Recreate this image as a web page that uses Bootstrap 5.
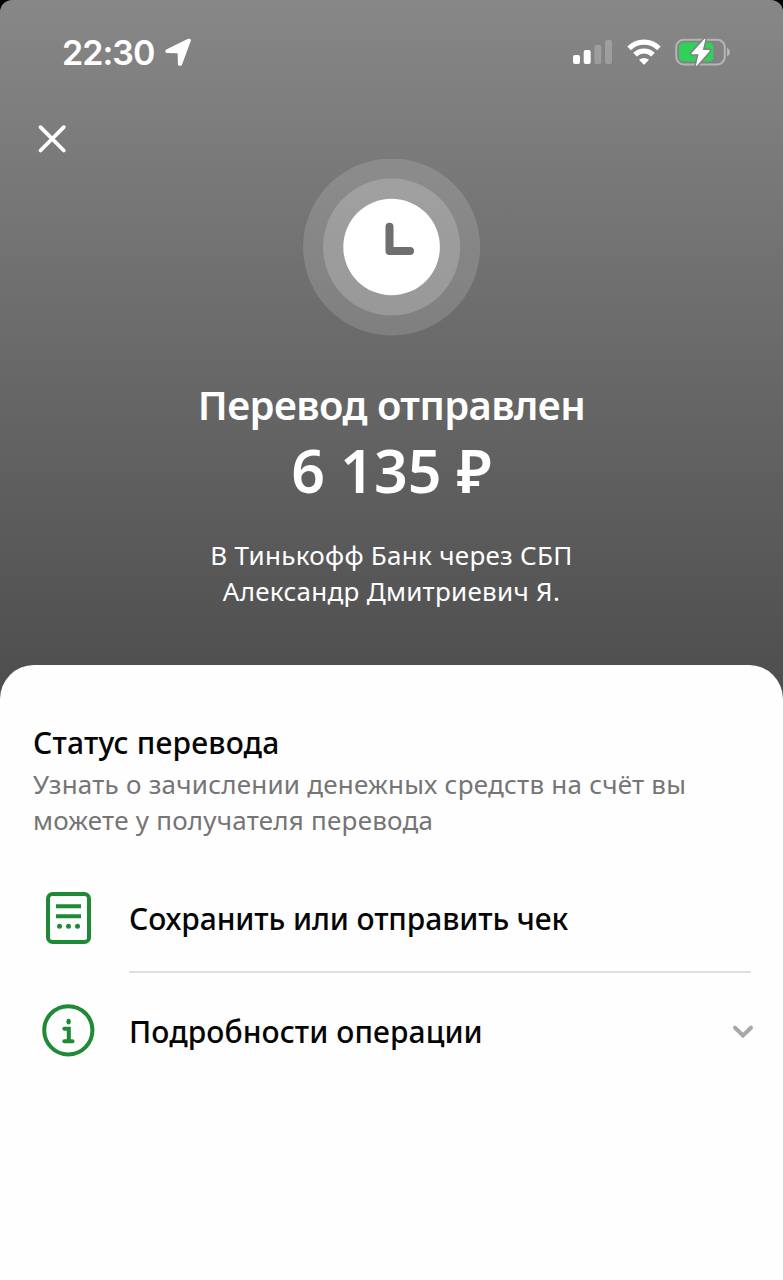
<!DOCTYPE html>
<html lang="ru">
<head>
<meta charset="utf-8">
<meta name="viewport" content="width=device-width, initial-scale=1">
<title>Перевод отправлен</title>
<link rel="stylesheet" href="https://cdn.jsdelivr.net/npm/bootstrap@5.3.0/dist/css/bootstrap.min.css">
<style>
  body { font-family: "Noto Sans", "Open Sans", sans-serif; color: #050505; background: #000; }
  .phone { height: 1280px; border-radius: 12px 12px 0 0; background: linear-gradient(#878787 0, #505050 660px, #4d4d4d 700px); }
  .hero { height: 665px; color: #fff; }
  .statusbar { height: 104px; padding: 0 52px 0 62px; }
  .time { font: 600 34px/40px Inter, sans-serif; letter-spacing: -.95px; padding-top: 1px; }
  .closebar { height: 55px; padding: 20px 37px 0; }
  .closebar svg, .statusbar svg, .hero svg, .menu-row svg { display: block; flex: none; }
  .status-icons { gap: 14px; }
  .title { font-size: 40px; line-height: 48px; font-weight: 600; margin-top: 45px; letter-spacing: -.57px; }
  .amount { font-size: 59px; line-height: 72px; font-weight: 620; margin-top: 5px; }
  .details { font-size: 26px; line-height: 36px; font-weight: 430; margin-top: 31px; letter-spacing: .28px; }
  .sheet { background: #fefefe; border-radius: 34px 34px 0 0; padding: 58px 32px 0 33px; }
  .sheet h2 { font-size: 30px; line-height: 40px; font-weight: 500; letter-spacing: .2px; }
  .hint { font-size: 26px; line-height: 36px; color: #757575; margin-top: 3px; font-weight: 420; letter-spacing: .23px; }
  .menu-list { margin-top: 25px; }
  .menu-row { padding-left: 7px; }
  .menu-icon { width: 56px; margin-right: 33px; }
  .menu-body { font-size: 30px; line-height: 40px; font-weight: 500; height: 115px; letter-spacing: .08px; padding-top: 2px; }
  .menu-body.with-line { height: 110px; border-bottom: 2px solid #dedede; padding-top: 4px; letter-spacing: -.1px; }
  .chevron { margin-right: -3px; }
</style>
</head>
<body>
<main class="phone d-flex flex-column overflow-hidden">
  <section class="hero d-flex flex-column">
    <div class="statusbar d-flex align-items-center justify-content-between">
      <div class="d-flex align-items-center">
        <span class="time">22:30</span>
        <svg class="ms-2" width="30" height="30" viewBox="0 0 30 30"><path d="M27.2 3.6 18.4 27.2Q17 29 15.6 27.2L15.4 17.2Q15.4 15.6 13.8 15.6L4 15.4Q1.8 14.6 3.6 13.2L25.4 2.5Q27.5 1.9 27.2 3.6Z" fill="#fff" stroke="#fff" stroke-width="1.4" stroke-linejoin="round"/></svg>
      </div>
      <div class="status-icons d-flex align-items-center">
        <svg width="40" height="26" viewBox="0 0 40 26"><g fill="#fff"><rect x="0" y="16" width="7" height="9" rx="2"/><rect x="10.7" y="11" width="7" height="14" rx="2"/><rect x="21.4" y="6" width="7" height="19" rx="2" opacity=".22"/><rect x="32" y="1" width="7" height="24" rx="2" opacity=".22"/></g></svg>
        <svg width="34" height="26" viewBox="0 0 34 26"><g fill="none" stroke="#fff" stroke-width="5.2"><path d="M2.1 9.3A21 21 0 0 1 31.9 9.3"/><path d="M8 15.6A13 13 0 0 1 26 15.6"/></g><path d="M12 20.8Q17 17.2 22 20.8L17.7 25.2Q17 25.8 16.3 25.2Z" fill="#fff"/></svg>
        <svg width="56" height="32" viewBox="0 0 56 32"><rect x="1.2" y="3.8" width="48.6" height="24.6" rx="7.5" fill="none" stroke="#b4b4b4" stroke-width="2"/><path d="M52 12.1Q55 13.4 55 16.2 55 19 52 20.4Z" fill="#b4b4b4"/><rect x="4" y="6.6" width="34.5" height="19" rx="4.5" fill="#2fd158"/><path d="M29.8 3.4 17 17.6H24.4L21.6 29.2 34.2 14.6H27Z" fill="#fff" stroke="#828282" stroke-width="4.4" stroke-linejoin="round"/><path d="M29.8 3.4 17 17.6H24.4L21.6 29.2 34.2 14.6H27Z" fill="#fff" stroke="#fff" stroke-width="1.2" stroke-linejoin="round"/></svg>
      </div>
    </div>
    <div class="closebar">
      <svg width="30" height="30" viewBox="0 0 30 30" role="button" aria-label="Закрыть"><path d="M3.5 3.2 26.8 26.5M26.8 3.2 3.5 26.5" stroke="#fff" stroke-width="3.8" stroke-linecap="round"/></svg>
    </div>
    <svg class="mx-auto" width="178" height="177" viewBox="0 0 178 177"><circle cx="88.6" cy="88" r="88.5" fill="#fff" opacity=".14"/><circle cx="88.6" cy="88" r="68.5" fill="#fff" opacity=".19"/><circle cx="88.6" cy="88" r="48.3" fill="#fff"/><path d="M86.5 67.7V92H107" fill="none" stroke="#6f6f6f" stroke-width="8" stroke-linecap="round" stroke-linejoin="round"/></svg>
    <div class="text-center text-nowrap">
      <h1 class="title mb-0">Перевод отправлен</h1>
      <div class="amount">6 135 ₽</div>
      <div class="details">В Тинькофф Банк через СБП<br>Александр Дмитриевич Я.</div>
    </div>
  </section>
  <section class="sheet flex-grow-1 text-nowrap">
    <h2 class="mb-0">Статус перевода</h2>
    <p class="hint mb-0">Узнать о зачислении денежных средств на счёт вы<br>можете у получателя перевода</p>
    <div class="menu-list">
      <div class="menu-row d-flex align-items-center">
        <div class="menu-icon"><svg width="56" height="56" viewBox="0 0 56 56"><g fill="none" stroke="#1f8a36" stroke-width="4"><rect x="8" y="4" width="41" height="48" rx="4.5"/><path d="M16 16.3H41M16 26.2H41"/></g><g fill="#1f8a36"><circle cx="19.5" cy="36.2" r="2.5"/><circle cx="28.5" cy="36.2" r="2.5"/><circle cx="37.5" cy="36.2" r="2.5"/></g></svg></div>
        <div class="menu-body with-line flex-grow-1 d-flex align-items-center">Сохранить или отправить чек</div>
      </div>
      <div class="menu-row d-flex align-items-center">
        <div class="menu-icon"><svg width="56" height="56" viewBox="0 0 56 56"><g fill="none" stroke="#1f8a36" stroke-width="4"><circle cx="28.3" cy="27.3" r="24.1"/><path d="M24.3 25.7H28.8V38M24.3 38.3H32.5" stroke-linecap="round"/></g><ellipse cx="28.6" cy="18.6" rx="2.2" ry="2.9" fill="#1f8a36"/></svg></div>
        <div class="menu-body flex-grow-1 d-flex align-items-center justify-content-between">Подробности операции
          <svg class="chevron" width="22" height="16" viewBox="0 0 22 16"><path d="M3 3.7 11 11.5 19 3.7" fill="none" stroke="#a8a8a8" stroke-width="4" stroke-linecap="round" stroke-linejoin="miter"/></svg></div>
      </div>
    </div>
  </section>
</main>
<script src="https://cdn.jsdelivr.net/npm/bootstrap@5.3.0/dist/js/bootstrap.bundle.min.js"></script>
</body>
</html>
